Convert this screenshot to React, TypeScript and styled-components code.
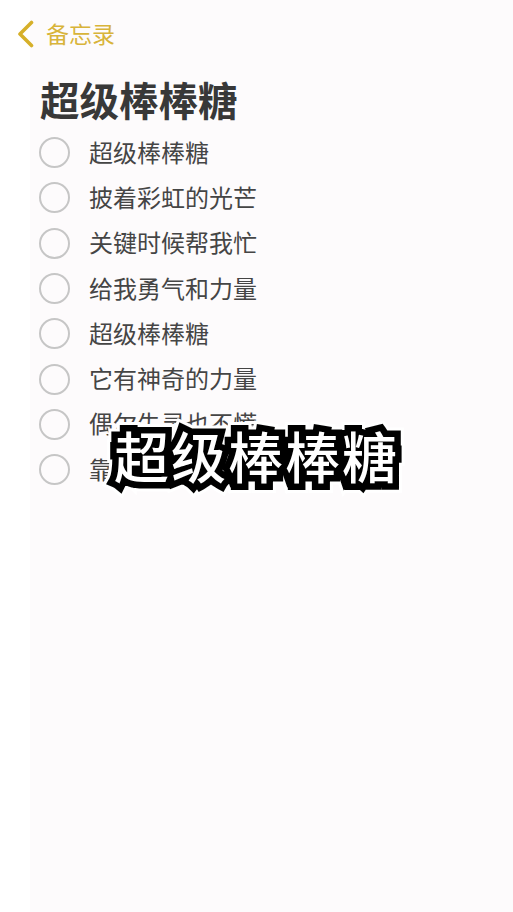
import styled, { createGlobalStyle } from "styled-components";

const GlobalStyle = createGlobalStyle`
  html, body {
    margin: 0;
    padding: 0;
  }
  body {
    font-family: "Noto Sans CJK SC", "Noto Sans", sans-serif;
    background: linear-gradient(to right, #ffffff 30px, #fdfbfc 30px);
  }
`;

const Page = styled.div`
  position: relative;
  width: 513px;
  min-height: 912px;
  display: flex;
  flex-direction: column;
`;

const Header = styled.div`
  display: flex;
  align-items: center;
  gap: 11px;
  padding: 19px 0 0 17px;
  height: 30px;
`;

const BackLabel = styled.span`
  font-size: 23px;
  line-height: 30px;
  color: #d8b43a;
  margin-top: -3px;
`;

const Title = styled.h1`
  margin: 26px 0 0 40px;
  font-size: 39.5px;
  line-height: 48px;
  font-weight: 700;
  color: #383838;
`;

const List = styled.ul`
  list-style: none;
  margin: 7px 0 0 0;
  padding: 0 0 0 39px;
`;

const Row = styled.li`
  display: flex;
  align-items: center;
  gap: 19px;
  height: 45.3px;
`;

const Circle = styled.span`
  width: 27px;
  height: 27px;
  border: 2px solid #c6c6c6;
  border-radius: 50%;
  flex-shrink: 0;
`;

const ItemText = styled.span`
  font-size: 24px;
  line-height: 30px;
  color: #454545;
  margin-top: -2px;
`;

const Caption = styled.div`
  position: absolute;
  left: 0;
  right: 0;
  top: 422px;
  display: grid;
  justify-items: center;
`;

// three stacked copies: white halo, black outline, thin white fill
const CaptionLayer = styled.span<{ $stroke: number; $color: string }>`
  grid-area: 1 / 1;
  font-size: 55px;
  line-height: 64px;
  font-weight: 500;
  letter-spacing: 2px;
  color: #ffffff;
  -webkit-text-stroke: ${({ $stroke }) => $stroke}px ${({ $color }) => $color};
`;

const items = [
  "超级棒棒糖",
  "披着彩虹的光芒",
  "关键时候帮我忙",
  "给我勇气和力量",
  "超级棒棒糖",
  "它有神奇的力量",
  "偶尔失灵也不慌",
  "靠着它就能飞翔",
];

const App = () => {
  const caption = "超级棒棒糖";
  return (
    <>
      <GlobalStyle />
      <Page>
        <Header>
          <svg width="18" height="28" viewBox="0 0 18 28">
            <path
              d="M14.5 2.5 L3 14 L14.5 25.5"
              fill="none"
              stroke="#d6b02a"
              strokeWidth="3.6"
              strokeLinecap="round"
              strokeLinejoin="round"
            />
          </svg>
          <BackLabel>备忘录</BackLabel>
        </Header>
        <Title>超级棒棒糖</Title>
        <List>
          {items.map((item, i) => (
            <Row key={i}>
              <Circle />
              <ItemText>{item}</ItemText>
            </Row>
          ))}
        </List>
        <Caption>
          <CaptionLayer $stroke={19} $color="#ffffff">
            {caption}
          </CaptionLayer>
          <CaptionLayer $stroke={13} $color="#000000">
            {caption}
          </CaptionLayer>
          <CaptionLayer $stroke={0} $color="transparent">
            {caption}
          </CaptionLayer>
        </Caption>
      </Page>
    </>
  );
};

export default App;
